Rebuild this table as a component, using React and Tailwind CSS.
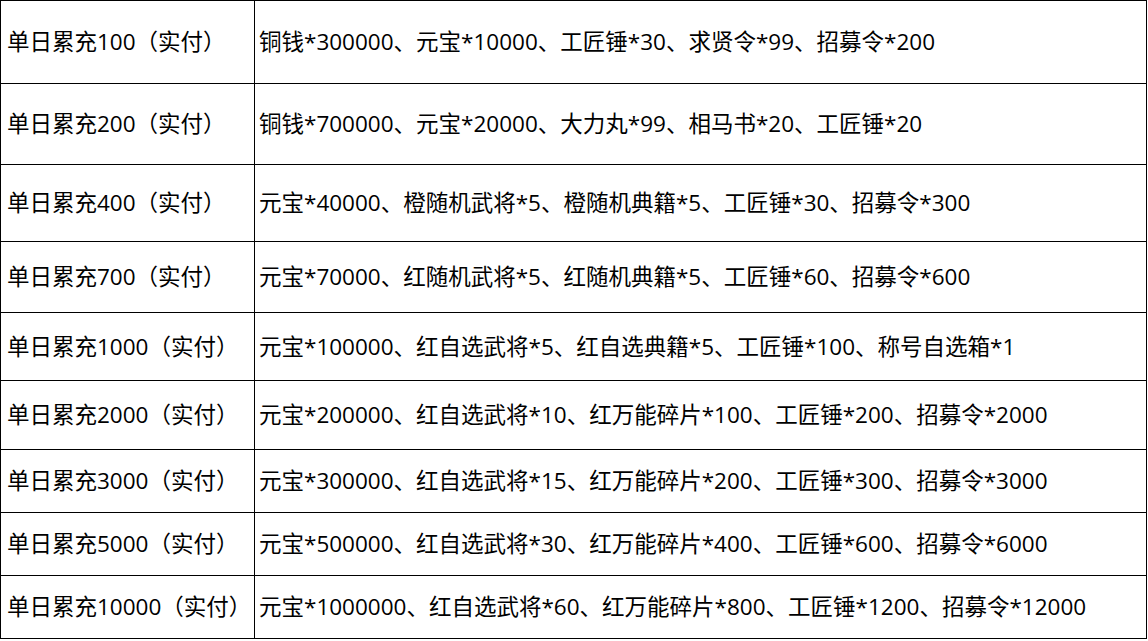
import React from "react";

const rows = [
  ["单日累充100（实付）", "铜钱*300000、元宝*10000、工匠锤*30、求贤令*99、招募令*200", "h-[83px]"],
  ["单日累充200（实付）", "铜钱*700000、元宝*20000、大力丸*99、相马书*20、工匠锤*20", "h-[81px]"],
  ["单日累充400（实付）", "元宝*40000、橙随机武将*5、橙随机典籍*5、工匠锤*30、招募令*300", "h-[77px]"],
  ["单日累充700（实付）", "元宝*70000、红随机武将*5、红随机典籍*5、工匠锤*60、招募令*600", "h-[71px]"],
  ["单日累充1000（实付）", "元宝*100000、红自选武将*5、红自选典籍*5、工匠锤*100、称号自选箱*1", "h-[68px]"],
  ["单日累充2000（实付）", "元宝*200000、红自选武将*10、红万能碎片*100、工匠锤*200、招募令*2000", "h-[69px]"],
  ["单日累充3000（实付）", "元宝*300000、红自选武将*15、红万能碎片*200、工匠锤*300、招募令*3000", "h-[63px]"],
  ["单日累充5000（实付）", "元宝*500000、红自选武将*30、红万能碎片*400、工匠锤*600、招募令*6000", "h-[63px]"],
  ["单日累充10000（实付）", "元宝*1000000、红自选武将*60、红万能碎片*800、工匠锤*1200、招募令*12000", "h-[63px]"],
];

export default function App() {
  return (
    <div className="w-[1148px] h-[641px] bg-white">
      <table
        className="w-[1147px] border-collapse text-[22.5px] text-black"
        style={{ fontFamily: '"Open Sans", "Noto Sans CJK SC", sans-serif' }}
      >
        <tbody>
          {rows.map(([label, reward, h]) => (
            <tr key={label} className={h}>
              <td className="w-[254px] border border-black pl-[6px] pr-0 align-middle whitespace-nowrap">
                {label}
              </td>
              <td className="border border-black pl-[4px] align-middle whitespace-nowrap">
                {reward}
              </td>
            </tr>
          ))}
        </tbody>
      </table>
    </div>
  );
}
